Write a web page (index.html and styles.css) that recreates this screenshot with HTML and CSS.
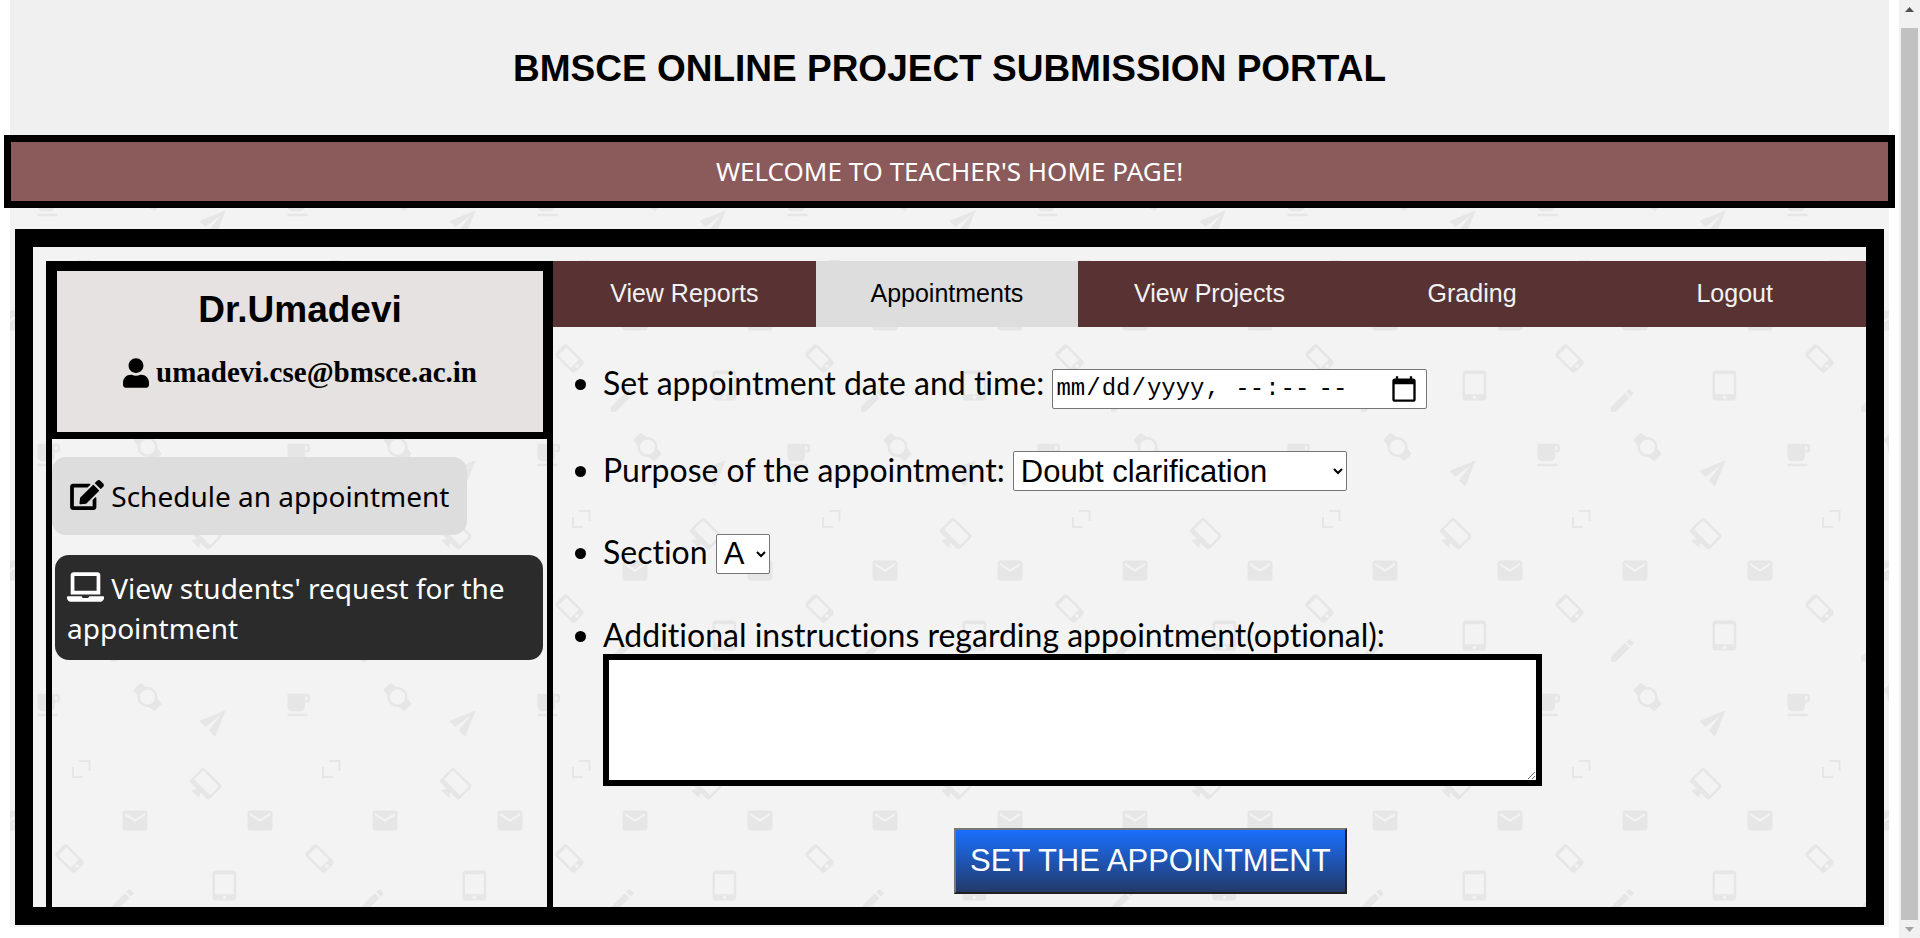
FILE: index.html
```html
<!DOCTYPE html>
<html lang="en-US">
<head>
<meta charset="utf-8">
<title>BMSCE Online Project Submission Portal</title>
<link rel="stylesheet" href="styles.css">
</head>
<body>
<div class="page">
  <header class="header"><h1>BMSCE ONLINE PROJECT SUBMISSION PORTAL</h1></header>
  <p class="banner">WELCOME TO TEACHER'S HOME PAGE!</p>
  <main class="frame">
    <aside class="sidebar">
      <section class="card">
        <h2>Dr.Umadevi</h2>
        <p class="email">
          <svg class="icon-user" viewBox="0 0 448 512" aria-hidden="true"><path d="M224 256c70.7 0 128-57.3 128-128S294.7 0 224 0 96 57.3 96 128s57.3 128 128 128zm89.6 32h-16.7c-22.2 10.2-46.9 16-72.9 16s-50.6-5.8-72.9-16h-16.7C60.2 288 0 348.2 0 422.4V464c0 26.5 21.5 48 48 48h352c26.5 0 48-21.5 48-48v-41.6c0-74.2-60.2-134.4-134.4-134.4z"/></svg>
          <span>umadevi.cse@bmsce.ac.in</span>
        </p>
      </section>
      <button class="side side-active" type="button"><svg class="icon-edit" viewBox="0 0 576 512" aria-hidden="true"><path d="M402.6 83.2l90.2 90.2c3.8 3.8 3.8 10 0 13.8L274.4 405.6l-92.8 10.3c-12.4 1.4-22.9-9.1-21.5-21.5l10.3-92.8L388.8 83.2c3.8-3.8 10-3.8 13.8 0zm162-22.9l-48.8-48.8c-15.2-15.2-39.9-15.2-55.2 0l-35.4 35.4c-3.8 3.8-3.8 10 0 13.8l90.2 90.2c3.8 3.8 10 3.8 13.8 0l35.4-35.4c15.2-15.3 15.2-40 0-55.2zM384 346.2V448H64V128h229.8c3.2 0 6.2-1.3 8.5-3.5l40-40c7.6-7.6 2.2-20.5-8.5-20.5H48C21.5 64 0 85.5 0 112v352c0 26.5 21.5 48 48 48h352c26.5 0 48-21.5 48-48V306.2c0-10.7-12.9-16-20.5-8.5l-40 40c-2.2 2.3-3.5 5.3-3.5 8.5z"/></svg> Schedule an appointment</button>
      <button class="side side-dark" type="button"><svg class="icon-laptop" viewBox="0 0 640 512" aria-hidden="true"><path d="M624 416H381.54c-.74 19.81-14.71 32-32.74 32H288c-18.69 0-33.02-17.47-32.77-32H16c-8.8 0-16 7.2-16 16v16c0 35.2 28.8 64 64 64h512c35.2 0 64-28.8 64-64v-16c0-8.8-7.2-16-16-16zM576 48c0-26.4-21.6-48-48-48H112C85.6 0 64 21.6 64 48v336h512V48zm-64 272H128V64h384v256z"/></svg> View students' request for the appointment</button>
    </aside>
    <section class="content">
      <nav class="tabs">
        <button type="button">View Reports</button>
        <button type="button" class="active">Appointments</button>
        <button type="button">View Projects</button>
        <button type="button">Grading</button>
        <button type="button">Logout</button>
      </nav>
      <form class="form">
        <ul>
          <li><label for="when">Set appointment date and time:</label> <input id="when" type="datetime-local"></li>
          <li><label for="purpose">Purpose of the appointment:</label> <select id="purpose" class="purpose"><option>Doubt clarification</option></select></li>
          <li><label for="section">Section</label> <select id="section" class="section"><option>A</option></select></li>
          <li><label for="notes">Additional instructions regarding appointment(optional):</label><textarea id="notes"></textarea></li>
        </ul>
        <button class="submit" type="submit">SET THE APPOINTMENT</button>
      </form>
    </section>
  </main>
</div>
<div class="scroll" aria-hidden="true">
  <svg viewBox="0 0 9 5"><path fill="#505050" d="M0 5h9L4.500 0z"/></svg>
  <div class="thumb"></div>
  <svg viewBox="0 0 9 5"><path fill="#a3a3a3" d="M0 0h9L4.500 5z"/></svg>
</div>
</body>
</html>
```
FILE: styles.css
```css
* { box-sizing: border-box; }

body {
  margin: 0;
  display: flex;
  min-height: 100vh;
  background: #fff;
  color: #000;
  font-family: Arial, "Liberation Sans", sans-serif;
}

.page {
  flex: 1;
  min-width: 0;
  margin: 0 10px 11px;
  background: #f3f3f3 url("data:image/svg+xml,%3Csvg xmlns='http://www.w3.org/2000/svg' width='250' height='250' fill='%23e6e6e6'%3E%3Cdefs%3E%3Cpath id='m' d='M20 4H4c-1.100 0-1.990.9-1.990 2L2 18c0 1.100.9 2 2 2h16c1.100 0 2-.9 2-2V6c0-1.100-.9-2-2-2zm0 4l-8 5-8-5V6l8 5 8-5v2z'/%3E%3C/defs%3E%3Cuse href='%23m' transform='translate(110 55.500) scale(1.250)'/%3E%3Cuse href='%23m' transform='translate(235 55.500) scale(1.250)'/%3E%3Cuse href='%23m' transform='translate(-15 55.500) scale(1.250)'/%3E%3Cpath transform='translate(22.500 190) scale(1.250)' d='M20 3H4v10c0 2.210 1.790 4 4 4h6c2.210 0 4-1.790 4-4v-3h2c1.110 0 2-.9 2-2V5c0-1.110-.89-2-2-2zm0 5h-2V5h2v3zM4 19h16v2H4z'/%3E%3Cpath transform='translate(137.500 197) rotate(-45) scale(1.250) translate(-12 -12)' d='M20 12c0-2.540-1.190-4.810-3.040-6.270L16 0H8l-.95 5.730C5.190 7.190 4 9.450 4 12s1.190 4.810 3.050 6.270L8 24h8l.96-5.730C18.810 16.810 20 14.540 20 12zM6 12c0-3.310 2.690-6 6-6s6 2.690 6 6-2.690 6-6 6-6-2.690-6-6z'/%3E%3Cpath transform='translate(206 220) rotate(-45) scale(1.250) translate(-12 -12)' d='M2 21L23 12 2 3v7l15 2-15 2z'/%3E%3Cpath d='M62 17h2v9h9v2H62zM69 10h11.500v11h-2v-9H69z'/%3E%3Cpath transform='translate(195.700 33.700) rotate(45) scale(1.250) translate(-12 -10)' d='M21 2H3c-1.100 0-2 .9-2 2v12c0 1.100.9 2 2 2h7l-2 3v1h8v-1l-2-3h7c1.100 0 2-.9 2-2V4c0-1.100-.9-2-2-2zm0 12H3V4h18v10z'/%3E%3Cpath transform='translate(59.500 108.500) rotate(-45) scale(1.250) translate(-11.500 -12)' d='M15.500 1h-8C6.120 1 5 2.120 5 3.500v17C5 21.880 6.120 23 7.500 23h8c1.380 0 2.500-1.120 2.500-2.500v-17C18 2.120 16.880 1 15.500 1zm-4 21c-.83 0-1.500-.67-1.500-1.500s.67-1.500 1.500-1.500 1.500.67 1.500 1.500-.67 1.500-1.500 1.500zm4.500-4H7V4h9v14z'/%3E%3Cpath transform='translate(200 120.500) scale(1.250)' d='M18.500 0h-14C3.120 0 2 1.120 2 2.500v19C2 22.880 3.120 24 4.500 24h14c1.380 0 2.500-1.120 2.500-2.500v-19C21 1.120 19.880 0 18.500 0zm-7 23c-.83 0-1.500-.67-1.500-1.500s.67-1.500 1.500-1.500 1.500.67 1.500 1.500-.67 1.500-1.500 1.500zm7.500-4H4V3h15v16z'/%3E%3Cpath transform='translate(97.250 135.500) scale(1.250)' d='M3 17.250V21h3.750L17.810 9.940l-3.750-3.750L3 17.250zM20.710 7.040c.39-.39.39-1.020 0-1.410l-2.340-2.340c-.39-.39-1.020-.39-1.410 0l-1.830 1.830 3.750 3.750 1.830-1.830z'/%3E%3C/svg%3E");
}

.header {
  display: flex;
  align-items: center;
  justify-content: center;
  height: 135px;
  padding-top: 3px;
  background: #f0f0f0;
}

.header h1 {
  margin: 0;
  font-size: 37px;
}

.banner {
  margin: 0 -6px;
  padding: 12px;
  border: 7px solid #000;
  background: #8b5a5a;
  color: #fff;
  font: 26px/35px "Comic Sans MS", "Noto Sans", sans-serif;
  text-align: center;
}

.frame {
  display: flex;
  margin: 21px 5px 0;
  padding: 14px 0 0 13px;
  border: 18px solid #000;
}

.sidebar {
  display: flex;
  flex-direction: column;
  align-items: flex-start;
  flex: 0 0 507px;
  border: 6px solid #000;
  border-bottom: 0;
}

.card {
  align-self: stretch;
  border: 4px solid #000;
  border-width: 4px 4px 7px 5px;
  padding: 17px 0 41px;
  background: #e5e2e1;
}

.card h2 {
  margin: 0;
  font-size: 37px;
  line-height: 44px;
  text-align: center;
}

.email {
  display: flex;
  align-items: center;
  justify-content: center;
  gap: 7px;
  margin: 22px 0 0;
  font: bold 29px/37px "Times New Roman", "Liberation Serif", serif;
}

.icon-user { width: 26px; height: 30px; }

.side {
  border: 0;
  border-radius: 14px;
  font: 28px/40px "Comic Sans MS", "Noto Sans", sans-serif;
  text-align: left;
}

.side svg {
  height: 30px;
  vertical-align: -3px;
  fill: currentColor;
}

.icon-edit { width: 34px; }
.icon-laptop { width: 37px; }

.side-active {
  margin-top: 18px;
  padding: 19px 18px;
  background: #ddd;
  color: #000;
}

.side-dark {
  margin: 20px 4px 0 3px;
  padding: 13px 12px 12px;
  background: #2b2b2b;
  color: #fff;
}

.content {
  flex: 1;
  min-width: 0;
}

.tabs { display: flex; }

.tabs button {
  flex: 1;
  padding: 17px 0 19px;
  border: 0;
  background: #593333;
  color: #f2f2f2;
  font: 25px/30px Arial, "Liberation Sans", sans-serif;
}

.tabs .active {
  background: #ddd;
  color: #000;
}

.form { width: 91%; }

.form ul {
  margin: 0;
  padding: 37px 0 0 50px;
  font: 32px/38px "Gill Sans MT", Lato, sans-serif;
  font-variant-ligatures: none;
}

.form li { margin-bottom: 42px; }

.form input,
.form select {
  height: 40px;
  border: 1px solid #767676;
  border-radius: 2px;
  background: #fff;
  color: #000;
}

.form input {
  width: 375px;
  padding: 0 8px 0 2px;
  font: 24px "Liberation Mono", monospace;
}

.form input::-webkit-calendar-picker-indicator {
  width: 28px;
  height: 28px;
  padding: 0;
  background-size: 28px 28px;
}

.form select {
  padding-left: 3px;
  font: 31px Arial, "Liberation Sans", sans-serif;
}

.purpose { width: 334px; }
.section { width: 54px; }

.form textarea {
  display: block;
  width: 82%;
  height: 132px;
  border: 6px solid #000;
  background: #fff;
  font: 31px Arial, "Liberation Sans", sans-serif;
}

.submit {
  display: block;
  margin: 0 auto 13px;
  padding: 13px 14px;
  border: 2px outset #767676;
  background: linear-gradient(#1a6fff, #233a68);
  color: #fff;
  font: 31px/36px Arial, "Liberation Sans", sans-serif;
}

.scroll {
  display: flex;
  flex-direction: column;
  align-items: center;
  width: 21px;
  padding: 7px 0 6px;
  background: #f1f1f1;
}

.scroll svg { width: 9px; height: 5px; }

.thumb {
  flex: 1;
  width: 17px;
  margin: 16px 0 7px;
  background: #c1c1c1;
}
```
